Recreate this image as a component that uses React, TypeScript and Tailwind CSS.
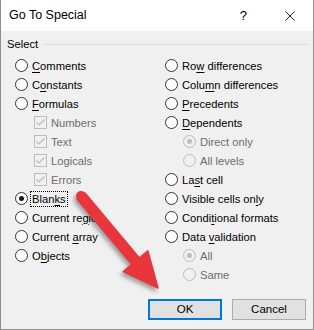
type Item = {
  label: string;
  u?: number;
  kind: "radio" | "check";
  sub?: boolean;
  disabled?: boolean;
  checked?: boolean;
  focus?: boolean;
};

const leftItems: Item[] = [
  { label: "Comments", u: 0, kind: "radio" },
  { label: "Constants", u: 1, kind: "radio" },
  { label: "Formulas", u: 0, kind: "radio" },
  { label: "Numbers", kind: "check", sub: true, disabled: true, checked: true },
  { label: "Text", kind: "check", sub: true, disabled: true, checked: true },
  { label: "Logicals", kind: "check", sub: true, disabled: true, checked: true },
  { label: "Errors", kind: "check", sub: true, disabled: true, checked: true },
  { label: "Blanks", u: 4, kind: "radio", checked: true, focus: true },
  { label: "Current region", u: 10, kind: "radio" },
  { label: "Current array", u: 8, kind: "radio" },
  { label: "Objects", u: 1, kind: "radio" },
];

const rightItems: Item[] = [
  { label: "Row differences", u: 2, kind: "radio" },
  { label: "Column differences", u: 4, kind: "radio" },
  { label: "Precedents", u: 0, kind: "radio" },
  { label: "Dependents", u: 0, kind: "radio" },
  { label: "Direct only", kind: "radio", sub: true, disabled: true, checked: true },
  { label: "All levels", kind: "radio", sub: true, disabled: true },
  { label: "Last cell", u: 2, kind: "radio" },
  { label: "Visible cells only", u: 16, kind: "radio" },
  { label: "Conditional formats", u: 5, kind: "radio" },
  { label: "Data validation", u: 5, kind: "radio" },
  { label: "All", kind: "radio", sub: true, disabled: true, checked: true },
  { label: "Same", kind: "radio", sub: true, disabled: true },
];

const Label = ({ item }: { item: Item }) => {
  const { label, u } = item;
  return (
    <span
      className={
        "ml-[2px] px-px border leading-[14px] whitespace-nowrap " +
        (item.focus ? "border-dotted border-black " : "border-transparent ") +
        (item.disabled ? "text-[#6d6d6d]" : "text-black")
      }
    >
      {u === undefined ? (
        label
      ) : (
        <>
          {label.slice(0, u)}
          <span className="underline underline-offset-[2px]">{label[u]}</span>
          {label.slice(u + 1)}
        </>
      )}
    </span>
  );
};

const Radio = ({ item }: { item: Item }) => (
  <span
    className={
      "w-[13px] h-[13px] shrink-0 rounded-full border flex items-center justify-center " +
      (item.disabled ? "border-[#bcbcbc] bg-[#f0f0f0]" : "border-[#333333] bg-white")
    }
  >
    {item.checked && (
      <span
        className={
          "w-[5px] h-[5px] rounded-full " +
          (item.disabled ? "bg-[#bcbcbc]" : "bg-[#1a1a1a]")
        }
      />
    )}
  </span>
);

const Check = ({ item }: { item: Item }) => (
  <span className="w-[13px] h-[13px] shrink-0 border border-[#bcbcbc] bg-[#f0f0f0] flex items-center justify-center">
    {item.checked && (
      <svg width="11" height="11" viewBox="0 0 11 11">
        <polyline
          points="1.5,5.5 4,8 9.5,2.5"
          fill="none"
          stroke="#bcbcbc"
          strokeWidth="1.2"
        />
      </svg>
    )}
  </span>
);

const Row = ({ item, indent }: { item: Item; indent: string }) => (
  <div className={"flex items-center h-[19px] " + (item.sub ? indent : "")}>
    {item.kind === "radio" ? <Radio item={item} /> : <Check item={item} />}
    <Label item={item} />
  </div>
);

const Arrow = () => (
  <svg
    className="absolute left-0 top-0 pointer-events-none"
    width="314"
    height="330"
    viewBox="0 0 314 330"
    style={{ filter: "drop-shadow(-2px 3px 2px rgba(0,0,0,0.35))" }}
  >
    <polygon
      points="83.8,192.8 138.4,258 146.9,250.9 157,288 122.3,271.5 130.8,264.4 76.2,199.2"
      fill="#e8363c"
      stroke="#e8363c"
      strokeWidth="1.5"
      strokeLinejoin="round"
    />
    <circle cx="80" cy="196" r="5" fill="#e8363c" />
  </svg>
);

export default function App() {
  return (
    <div className="relative w-[314px] h-[330px] bg-[#f0f0f0] border-x border-b border-[#8f8f8f] font-['Liberation_Sans',Arial,sans-serif] text-[11.2px] text-black overflow-hidden">
      <div className="h-[31px] bg-white flex items-center pl-[8px] pr-[18px]">
        <span className="text-[12.5px]">Go To Special</span>
        <span className="ml-auto text-[13px] mr-[38px]">?</span>
        <svg width="10" height="10" viewBox="0 0 10 10">
          <path d="M0.5 0.5 L9.5 9.5 M9.5 0.5 L0.5 9.5" stroke="#222" strokeWidth="1" />
        </svg>
      </div>
      <div className="pt-[6px] pl-[6px] pr-[5px]">
        <div className="flex items-center h-[14px]">
          <span>Select</span>
          <div className="flex-1 ml-[6px] h-px bg-[#dcdcdc]" />
        </div>
        <div className="grid grid-cols-[150px_1fr] mt-[5px] ml-[8px]">
          <div className="flex flex-col">
            {leftItems.map((it) => (
              <Row key={it.label} item={it} indent="pl-[19px]" />
            ))}
          </div>
          <div className="flex flex-col">
            {rightItems.map((it) => (
              <Row key={it.label} item={it} indent="pl-[18px]" />
            ))}
          </div>
        </div>
        <div className="flex justify-end gap-[10px] mt-[15px] pr-[2px]">
          <button className="w-[74px] h-[21px] border-2 border-[#0078d7] bg-[#e1e1e1] text-[11.5px]">
            OK
          </button>
          <button className="w-[74px] h-[21px] border border-[#adadad] bg-[#e1e1e1] text-[11.5px]">
            Cancel
          </button>
        </div>
      </div>
      <Arrow />
    </div>
  );
}
